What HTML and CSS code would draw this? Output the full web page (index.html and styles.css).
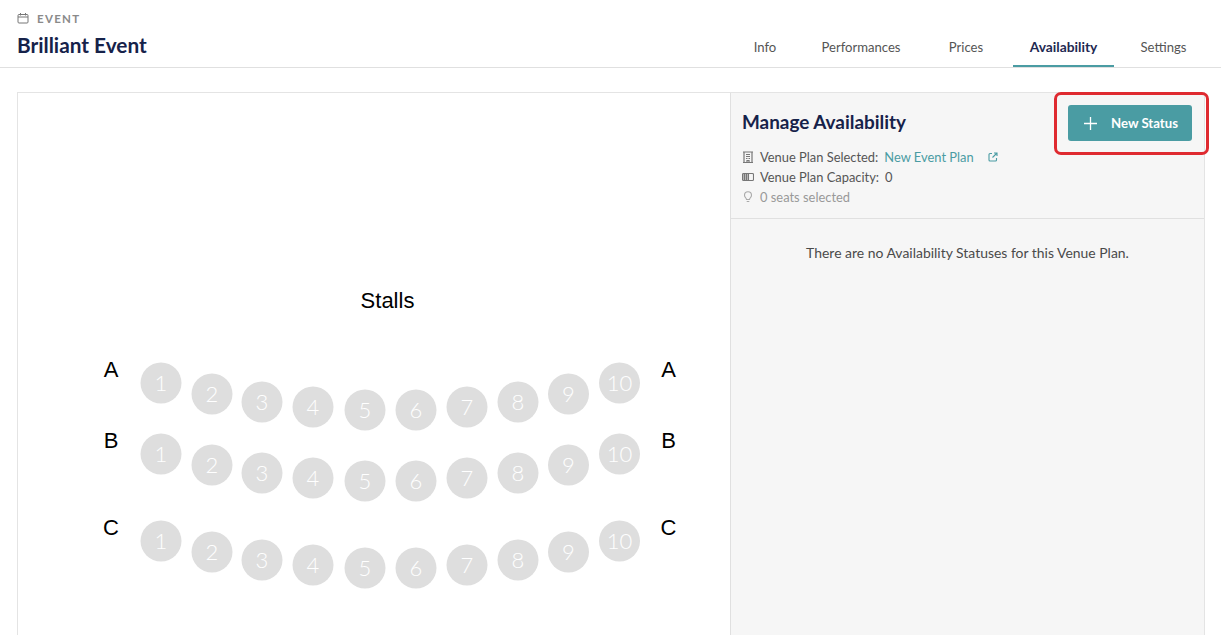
FILE: index.html
```html
<!DOCTYPE html>
<html lang="en">
<head>
<meta charset="utf-8">
<title>Brilliant Event</title>
<link rel="stylesheet" href="styles.css">
</head>
<body>
<header class="topbar">
  <div class="title-block">
    <div class="eyebrow">
      <svg class="eyebrow-icon" viewBox="0 0 12 12" width="12" height="12" fill="none" stroke="currentColor" stroke-width="1"><rect x="1" y="2.500" width="10" height="8.500" rx="1"/><path d="M1 5h10M3.500 1v2.500M8.500 1v2.500"/></svg>
      <span>EVENT</span>
    </div>
    <h1 class="event-name">Brilliant Event</h1>
  </div>
  <nav class="tabs">
    <a class="tab tab-info">Info</a>
    <a class="tab tab-perf">Performances</a>
    <a class="tab tab-prices">Prices</a>
    <a class="tab tab-avail active">Availability</a>
    <a class="tab tab-settings">Settings</a>
  </nav>
</header>
<main class="content">
  <section class="plan">
    <svg class="plan-svg" width="712" height="542" viewBox="18 93 712 542">
      <g class="labels">
        <text x="387.500" y="308" text-anchor="middle">Stalls</text>
        <text x="111" y="377" text-anchor="middle">A</text><text x="668.500" y="377" text-anchor="middle">A</text>
        <text x="111" y="448" text-anchor="middle">B</text><text x="668.500" y="448" text-anchor="middle">B</text>
        <text x="111" y="535" text-anchor="middle">C</text><text x="668.500" y="535" text-anchor="middle">C</text>
      </g>
      <g class="seats" id="seats"></g>
    </svg>
  </section>
  <aside class="side">
    <div class="side-head">
      <div class="head-row">
        <h2 class="side-title">Manage Availability</h2>
        <button class="new-status">
          <svg viewBox="0 0 13 13" width="13" height="13" fill="none" stroke="currentColor" stroke-width="1.300"><path d="M6.500 0v13M0 6.500h13"/></svg>
          <span>New Status</span>
        </button>
      </div>
      <ul class="facts">
        <li>
          <svg class="fact-icon" viewBox="0 0 12 12" width="12" height="12" fill="none" stroke="currentColor" stroke-width="1.200"><path d="M1 1h10M2 1v10.500M10 1v10.500M1 11.500h10M4 3.500h4M4 5.500h4M4 7.500h1.500M6.500 7.500H8M5 11V9.500h2V11"/></svg>
          <span class="fact-label">Venue Plan Selected:</span>
          <a class="fact-link">New Event Plan</a>
          <svg class="ext-icon" viewBox="0 0 10 10" width="10" height="10" fill="none" stroke="currentColor" stroke-width="1.100"><path d="M4 1.500H2a1 1 0 0 0-1 1V8a1 1 0 0 0 1 1h5.500a1 1 0 0 0 1-1V6M4.500 5.500 9 1M6 1h3v3"/></svg>
        </li>
        <li>
          <svg class="fact-icon" viewBox="0 0 12 12" width="12" height="12" fill="none" stroke="currentColor" stroke-width="1.100"><rect x="0.500" y="2.500" width="11" height="7" rx="1"/><path d="M2.500 2.500v7M4.500 2.500v7M6.500 2.500v7"/><rect x="1" y="3" width="5.500" height="6" fill="currentColor" opacity=".45" stroke="none"/></svg>
          <span class="fact-label">Venue Plan Capacity:</span>
          <span>0</span>
        </li>
        <li class="muted">
          <svg class="fact-icon" viewBox="0 0 12 12" width="12" height="12" fill="none" stroke="currentColor" stroke-width="1.100"><path d="M4.500 8.500C4.300 7 2.500 6.200 2.500 4.200a3.500 3.500 0 0 1 7 0C9.500 6.200 7.700 7 7.500 8.500zM4.700 10.500h2.600"/></svg>
          <span>0 seats selected</span>
        </li>
      </ul>
    </div>
    <p class="empty">There are no Availability Statuses for this Venue Plan.</p>
  </aside>
</main>
<div class="highlight"></div>
<script src="seats.js"></script>
</body>
</html>
```
FILE: styles.css
```css
* { box-sizing: border-box; }
html, body { margin: 0; height: 635px; overflow: hidden; }
body { background: #fff; font-family: Lato, "Open Sans", sans-serif; color: #4a4a4a; position: relative; }
.topbar { height: 68px; border-bottom: 1px solid #e0e0e0; padding: 11px 18px 0 17px; display: flex; justify-content: space-between; }
.eyebrow { display: flex; align-items: center; gap: 8px; height: 14px; font-size: 11.500px; font-weight: 700; letter-spacing: 1.300px; color: #8a8a8a; }
.eyebrow-icon { color: #777; }
.event-name { margin: 7px 0 0; font-size: 20.800px; line-height: 26px; font-weight: 700; color: #16224a; }
.tabs { display: flex; height: 56px; padding-top: 28px; }
.tab { font-size: 13.100px; line-height: 16px; color: #555; text-align: center; height: 28px; }
.tab-info { width: 56px; margin-right: 12px; }
.tab-perf { width: 112px; margin-right: 15px; }
.tab-prices { width: 68px; margin-right: 13px; }
.tab-avail { width: 101px; margin-right: 10px; }
.tab-settings { width: 79px; }
.tab.active { font-size: 13.800px; font-weight: 700; color: #1f2a52; border-bottom: 2px solid #4a9ca3; }
.content { display: flex; margin: 24px 16px 0 17px; height: 544px; border: 1px solid #e4e4e4; border-bottom: 0; }
.plan { width: 712px; background: #fff; flex: none; }
.plan-svg { display: block; }
.labels text { font-family: "Liberation Sans", Arial, sans-serif; font-size: 22px; fill: #000; }
.side { flex: 1; background: #f6f6f6; border-left: 1px solid #e0e0e0; }
.side-head { height: 126px; border-bottom: 1px solid #e0e0e0; padding: 12px 12px 0 11px; }
.head-row { display: flex; justify-content: space-between; align-items: center; height: 36px; }
.side-title { margin: 0 0 2px; font-size: 18.900px; line-height: 24px; font-weight: 700; color: #16224a; }
.new-status { display: flex; align-items: center; gap: 14px; width: 124px; height: 36px; padding: 0 0 0 16px; border: 0; border-radius: 3px; background: #4a9ca3; color: #fff; font: 700 13.200px Lato, sans-serif; }
.facts { list-style: none; margin: 6px 0 0; padding: 0; font-size: 12.900px; line-height: 20px; color: #555; }
.facts li { display: flex; align-items: center; height: 20px; }
.fact-icon { margin-right: 6px; color: #777; }
.fact-label { margin-right: 6px; }
.fact-link { color: #4a9ca3; }
.ext-icon { margin-left: 14px; color: #4a9ca3; }
.muted { color: #999; }
.muted .fact-icon { color: #aaa; }
.empty { margin: 25px 0 0; text-align: center; font-size: 13.950px; line-height: 18px; color: #4a4a4a; }
.seat { fill: #dedede; }
.seat-num { font-family: Lato, sans-serif; font-weight: 300; font-size: 22px; fill: #fff; text-anchor: middle; }
.highlight { position: absolute; left: 1054px; top: 92px; width: 155px; height: 63px; border: 3px solid #df2a30; border-radius: 7px; }
```
FILE: seats.js
```js
var NS = "http://www.w3.org/2000/svg";
var xs = [161, 212, 262, 313, 365, 416, 467, 518, 568.5, 619.5];
var ys = [383, 394, 402, 407, 410, 410, 407, 402, 394, 383];
var rows = [0, 71, 158];
var root = document.getElementById("seats");
rows.forEach(function (dy) {
  xs.forEach(function (x, i) {
    var c = document.createElementNS(NS, "circle");
    c.setAttribute("class", "seat");
    c.setAttribute("cx", x);
    c.setAttribute("cy", ys[i] + dy);
    c.setAttribute("r", 20.5);
    root.appendChild(c);
    var t = document.createElementNS(NS, "text");
    t.setAttribute("class", "seat-num");
    t.setAttribute("x", x);
    t.setAttribute("y", ys[i] + dy + 8);
    t.textContent = i + 1;
    root.appendChild(t);
  });
});
```
